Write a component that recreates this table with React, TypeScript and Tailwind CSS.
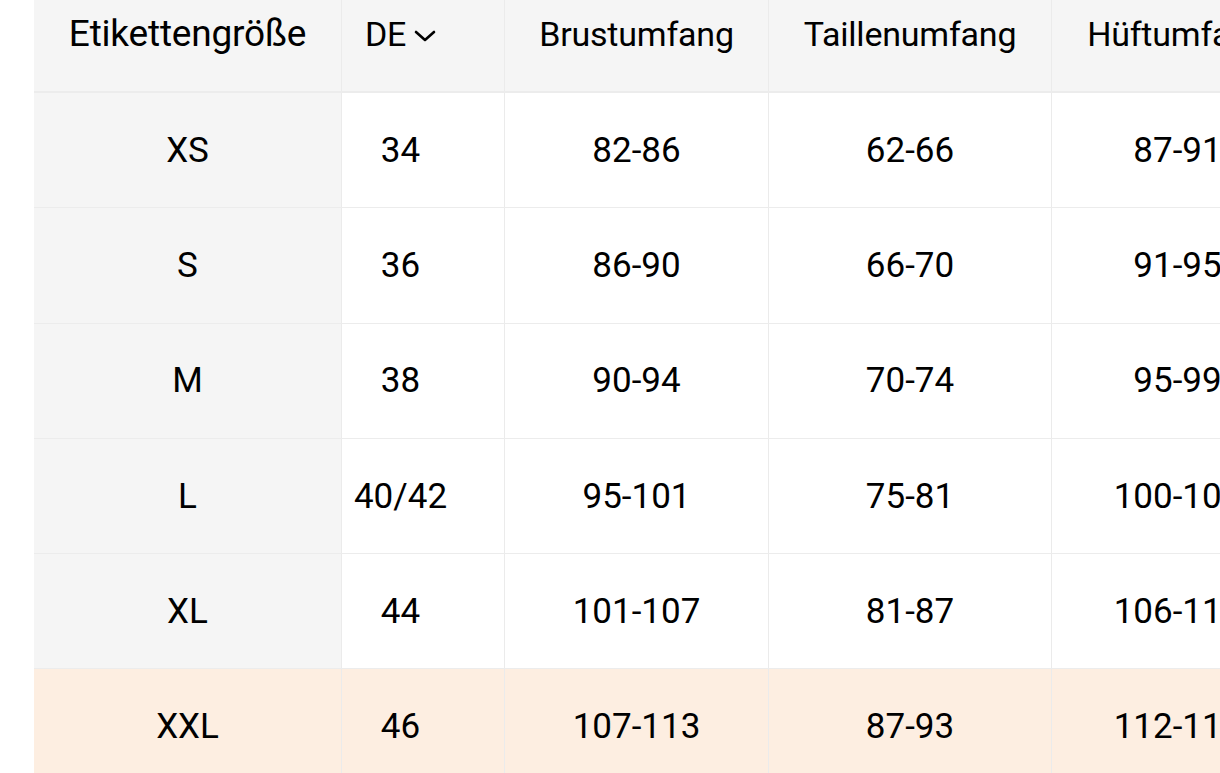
const headers = ['Brustumfang', 'Taillenumfang', 'Hüftumfang'];

const rows = [
  { label: 'XS', de: '34', vals: ['82-86', '62-66', '87-91'] },
  { label: 'S', de: '36', vals: ['86-90', '66-70', '91-95'] },
  { label: 'M', de: '38', vals: ['90-94', '70-74', '95-99'] },
  { label: 'L', de: '40/42', vals: ['95-101', '75-81', '100-106'] },
  { label: 'XL', de: '44', vals: ['101-107', '81-87', '106-112'] },
  { label: 'XXL', de: '46', vals: ['107-113', '87-93', '112-118'], hl: true },
];

const grid = 'grid grid-cols-[308px_163px_264px_283px_252px]';
const cell = 'flex items-center justify-center border-r border-[#ebebeb] whitespace-nowrap';

export default function App() {
  return (
    <div
      className="w-screen h-screen overflow-hidden bg-white pl-[34px] text-black"
      style={{ fontFamily: 'Roboto, "Noto Sans", sans-serif' }}
    >
      <div className="w-[1400px] -mt-[23px]">
        <div className={`${grid} h-[116px] bg-[#f5f5f5] border-b-2 border-[#ececec] text-[34px] tracking-[-0.2px]`}>
          <div className={`${cell} text-[37px]`}>Etikettengröße</div>
          <div className={`${cell} pr-[45px]`}>
            <span className="flex items-center gap-[8px]">
              DE
              <svg width="22" height="12" viewBox="0 0 22 12" className="mt-[4px]">
                <path d="M2 2l9 8 9-8" fill="none" stroke="#000" strokeWidth="2.6" strokeLinecap="round" strokeLinejoin="round" />
              </svg>
            </span>
          </div>
          {headers.map((h) => (
            <div key={h} className={cell}>
              {h}
            </div>
          ))}
        </div>
        {rows.map((r) => (
          <div
            key={r.label}
            className={`${grid} h-[115.3px] border-b border-[#ececec] text-[35px] ${r.hl ? 'bg-[#fdeee1]' : ''}`}
          >
            <div className={`${cell} pt-[2px] ${r.hl ? '' : 'bg-[#f5f5f5]'}`}>{r.label}</div>
            <div className={`${cell} pt-[2px] pr-[45px]`}>{r.de}</div>
            {r.vals.map((v, i) => (
              <div key={i} className={`${cell} pt-[2px]`}>
                {v}
              </div>
            ))}
          </div>
        ))}
      </div>
    </div>
  );
}
